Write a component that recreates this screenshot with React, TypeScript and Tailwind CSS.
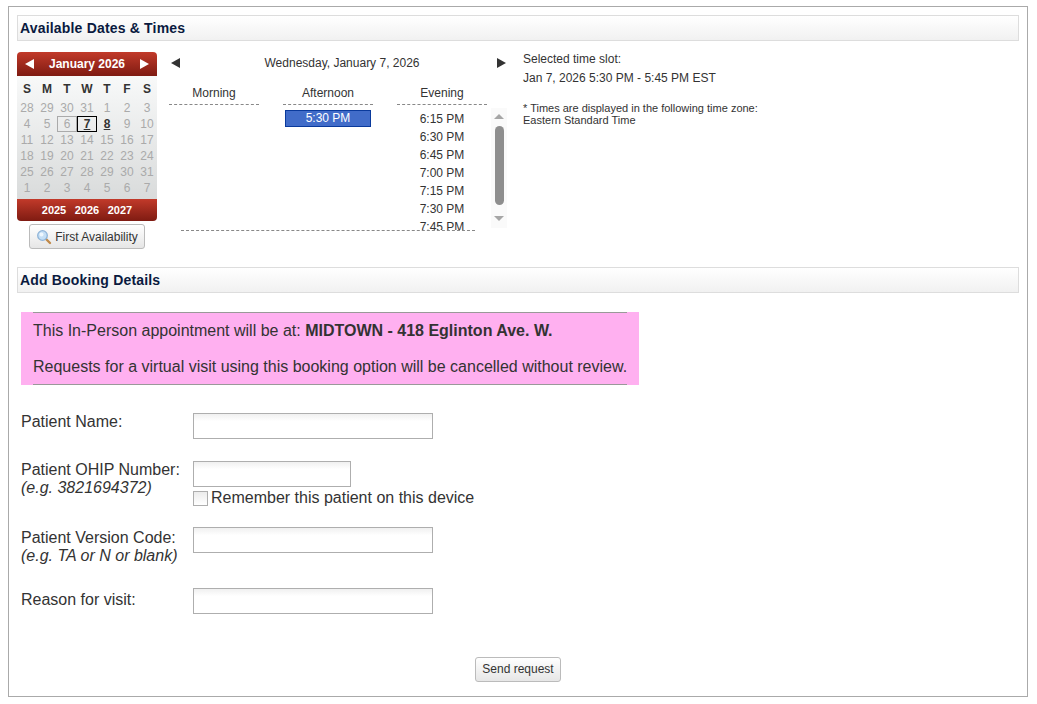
import React from "react";

const WEEKS = [
  [28, 29, 30, 31, 1, 2, 3],
  [4, 5, 6, 7, 8, 9, 10],
  [11, 12, 13, 14, 15, 16, 17],
  [18, 19, 20, 21, 22, 23, 24],
  [25, 26, 27, 28, 29, 30, 31],
  [1, 2, 3, 4, 5, 6, 7],
];
const DAYS = ["S", "M", "T", "W", "T", "F", "S"];
const EVENING = ["6:15 PM", "6:30 PM", "6:45 PM", "7:00 PM", "7:15 PM", "7:30 PM", "7:45 PM"];

function SectionBar({ title }: { title: string }) {
  return (
    <div className="h-[26px] border border-[#dddddd] bg-gradient-to-b from-white to-[#f1f1f1] pl-[2px] text-[14px] leading-[24px] font-bold tracking-[0.18px] text-[#0a1a3f]">
      {title}
    </div>
  );
}

function ArrowLeft({ className }: { className: string }) {
  return <span className={"h-0 w-0 border-y-[5px] border-r-[9px] border-y-transparent " + className} />;
}

function ArrowRight({ className }: { className: string }) {
  return <span className={"h-0 w-0 border-y-[5px] border-l-[9px] border-y-transparent " + className} />;
}

function Calendar() {
  return (
    <div className="w-[140px] overflow-hidden rounded-[4px]">
      <div className="flex h-[24px] items-center justify-between bg-gradient-to-b from-[#c23a2a] to-[#7f1b12] px-[8px] text-[12px] font-bold text-white">
        <ArrowLeft className="border-r-white" />
        <span>January 2026</span>
        <ArrowRight className="border-l-white" />
      </div>
      <div className="h-[123px] bg-gradient-to-b from-[#f8f9f9] to-[#d9dbdb] pt-[5px]">
        <div className="grid grid-cols-[repeat(7,20px)] text-center text-[12px] leading-[16px] font-bold text-[#333333]">
          {DAYS.map((d, i) => (
            <div key={i} className="h-[19px]">{d}</div>
          ))}
        </div>
        <div className="grid grid-cols-[repeat(7,20px)] text-center text-[12px] leading-[16px] text-[#aaaaaa]">
          {WEEKS.flat().map((d, i) => {
            if (i === 9) {
              return <div key={i} className="h-[16px] border border-[#aaaaaa] leading-[14px]">{d}</div>;
            }
            if (i === 10) {
              return <div key={i} className="h-[16px] border border-black font-bold leading-[14px] text-[#333333] underline">{d}</div>;
            }
            if (i === 11) {
              return <div key={i} className="h-[16px] font-bold text-[#333333] underline">{d}</div>;
            }
            return <div key={i} className="h-[16px]">{d}</div>;
          })}
        </div>
      </div>
      <div className="flex h-[22px] items-center justify-center gap-[8.5px] bg-gradient-to-b from-[#c23a2a] to-[#7f1b12] text-[11px] font-bold text-white">
        <span>2025</span>
        <span>2026</span>
        <span>2027</span>
      </div>
    </div>
  );
}

function Magnifier() {
  return (
    <svg width="16" height="16" viewBox="0 0 16 16">
      <path d="M9.5 9.5L14 14" stroke="#c08a4a" strokeWidth="2.4" strokeLinecap="round" />
      <circle cx="6.5" cy="6.5" r="4.8" fill="#c5dff5" stroke="#8fb4d8" strokeWidth="1.3" />
      <circle cx="5.5" cy="5.5" r="2" fill="#eef7fe" />
    </svg>
  );
}

function TimePicker() {
  return (
    <div className="relative ml-[12px] h-[179px] w-[338px] text-[12px] text-[#333333]">
      <div className="flex h-[20px] items-center justify-between pt-[1px] pr-[1px] pl-[2px]">
        <ArrowLeft className="border-r-[#333333]" />
        <span className="ml-[7px]">Wednesday, January 7, 2026</span>
        <ArrowRight className="border-l-[#333333]" />
      </div>
      <div className="mt-[13px] flex gap-[24px]">
        <div className="w-[90px] border-b border-dashed border-[#888888] pb-[2px] text-center leading-[17px]">Morning</div>
        <div className="w-[90px] border-b border-dashed border-[#888888] pb-[2px] text-center leading-[17px]">Afternoon</div>
        <div className="w-[90px] border-b border-dashed border-[#888888] pb-[2px] text-center leading-[17px]">Evening</div>
      </div>
      <div className="flex h-[125px]">
        <div className="w-[114px]" />
        <div className="w-[114px] pt-[5px] pl-[2px]">
          <div className="h-[17px] w-[86px] border border-[#0a3a9c] bg-[#416cc9] text-center leading-[15px] text-white">5:30 PM</div>
        </div>
        <div className="h-[125px] w-[90px] overflow-hidden pt-[5px] text-center">
          {EVENING.map((t) => (
            <div key={t} className="h-[18px] leading-[18px]">{t}</div>
          ))}
        </div>
        <div className="mt-[3px] ml-[4px] flex h-[120px] w-[16px] flex-col items-center bg-[#fafafa] pt-[6px]">
          <div className="h-0 w-0 border-x-[5px] border-b-[5px] border-x-transparent border-b-[#a6a6a6]" />
          <div className="mt-[7px] h-[79px] w-[9px] rounded-full bg-[#8e8e8e]" />
          <div className="mt-[11px] h-0 w-0 border-x-[5px] border-t-[5px] border-x-transparent border-t-[#a6a6a6]" />
        </div>
      </div>
      <div className="absolute top-[178px] left-[12px] w-[294px] border-t border-dashed border-[#888888]" />
    </div>
  );
}

function Field({
  label,
  hint,
  children,
  className,
  labelClass = "",
}: {
  label: string;
  hint?: string;
  children: React.ReactNode;
  className: string;
  labelClass?: string;
}) {
  return (
    <div className={"flex " + className}>
      <div className={"w-[172px] text-[16px] leading-[18px] text-[#333333] " + labelClass}>
        <div>{label}</div>
        {hint && <div className="italic">{hint}</div>}
      </div>
      <div>{children}</div>
    </div>
  );
}

function TextInput({ width }: { width: string }) {
  return <input type="text" className={"block h-[26px] border border-[#aeaeae] bg-gradient-to-b from-[#f0f0f0] to-white to-30% " + width} />;
}

export default function App() {
  return (
    <div className="bg-white px-[8px] pt-[6px] pb-[7px] font-['Liberation_Sans',Arial,sans-serif]">
      <div className="h-[691px] w-[1020px] border border-[#aaaaaa] px-[8px] pt-[8px]">
        <SectionBar title="Available Dates & Times" />

        <div className="mt-[11px] flex h-[215px]">
          <div className="flex w-[140px] flex-col items-center">
            <Calendar />
            <button className="mt-[3px] flex h-[25px] w-[116px] items-center justify-center gap-[3px] rounded-[3px] border border-[#bbbbbb] bg-gradient-to-b from-white to-[#e6e6e6] text-[12px] text-[#333333]">
              <Magnifier />
              First Availability
            </button>
          </div>
          <TimePicker />
          <div className="ml-[16px] text-[12px] text-[#333333]">
            <div className="h-[14px] leading-[14px]">Selected time slot:</div>
            <div className="mt-[5px] h-[14px] leading-[14px]">Jan 7, 2026 5:30 PM - 5:45 PM EST</div>
            <div className="mt-[17px] text-[11px] leading-[12px]">* Times are displayed in the following time zone:</div>
            <div className="text-[11px] leading-[12px]">Eastern Standard Time</div>
          </div>
        </div>

        <SectionBar title="Add Booking Details" />

        <div className="mt-[19px] ml-[4px] w-[618px] bg-[#ffb0f0] px-[12px] text-[16px] text-[#333333]">
          <div className="h-[73px] border-y border-[#999999] pt-[9px] leading-[18px] whitespace-nowrap">
            <p>
              This In-Person appointment will be at: <b>MIDTOWN - 418 Eglinton Ave. W.</b>
            </p>
            <p className="mt-[18px]">Requests for a virtual visit using this booking option will be cancelled without review.</p>
          </div>
        </div>

        <div className="ml-[4px]">
          <Field label="Patient Name:" className="mt-[28px]">
            <TextInput width="w-[240px]" />
          </Field>
          <Field label="Patient OHIP Number:" hint="(e.g. 3821694372)" className="mt-[22px]">
            <TextInput width="w-[158px]" />
            <label className="mt-[3px] flex h-[16px] items-center gap-[3px] text-[16px] text-[#333333]">
              <span className="h-[15px] w-[15px] border border-[#aeaeae] bg-gradient-to-b from-[#ececec] to-white" />
              Remember this patient on this device
            </label>
          </Field>
          <Field label="Patient Version Code:" hint="(e.g. TA or N or blank)" className="mt-[21px]" labelClass="pt-[2px]">
            <TextInput width="w-[240px]" />
          </Field>
          <Field label="Reason for visit:" className="mt-[23px]" labelClass="pt-[3px]">
            <TextInput width="w-[240px]" />
          </Field>
        </div>

        <div className="mt-[43px] flex justify-center">
          <button className="h-[25px] w-[86px] rounded-[3px] border border-[#bbbbbb] bg-gradient-to-b from-white to-[#e6e6e6] pb-[1px] text-[12px] text-[#333333]">
            Send request
          </button>
        </div>
      </div>
    </div>
  );
}
